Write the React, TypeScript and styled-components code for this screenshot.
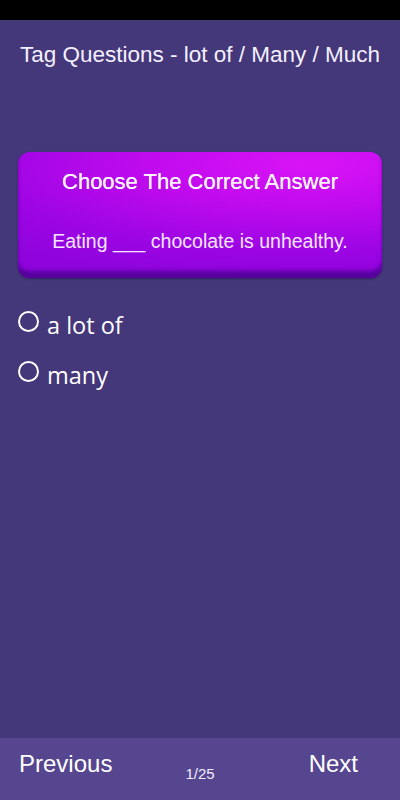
import React from "react";
import styled, { createGlobalStyle } from "styled-components";

const Global = createGlobalStyle`
  html, body { margin: 0; padding: 0; background: #44377a; }
  body { font-family: "Liberation Sans", Arial, sans-serif; }
  * { box-sizing: border-box; }
`;

const Page = styled.div`
  width: 400px;
  height: 800px;
  display: flex;
  flex-direction: column;
  background: #44377a;
  color: #ffffff;
  overflow: hidden;
`;

const StatusBar = styled.div`
  height: 20px;
  background: #000000;
  flex-shrink: 0;
`;

const Main = styled.main`
  flex: 1;
  display: flex;
  flex-direction: column;
`;

const Title = styled.h1`
  margin: 0;
  padding-top: 23px;
  font-size: 22.5px;
  line-height: 24px;
  font-weight: 400;
  text-align: center;
  white-space: nowrap;
  color: #f4f0ff;
`;

const Card = styled.section`
  margin: 85px 18px 0;
  height: 126px;
  border-radius: 12px;
  background: radial-gradient(ellipse 120% 90% at 80% 10%, #d914f6 0%, #c10bee 35%, #9d05e4 75%, #8f04dd 100%);
  box-shadow: inset 0 -8px 4px -1px rgba(70, 0, 140, 0.8), 0 1px 2px rgba(20, 0, 50, 0.4);
  display: flex;
  flex-direction: column;
  align-items: center;
  padding-top: 18px;
`;

const CardTitle = styled.h2`
  margin: 0;
  font-size: 22px;
  line-height: 24px;
  font-weight: 400;
  color: #fbf2ff;
  text-shadow: 0 0 0.5px #fff;
`;

const Sentence = styled.p`
  margin: 35px 0 0;
  font-size: 19.5px;
  line-height: 24px;
  color: #f5e6ff;
`;

const Options = styled.div`
  margin-top: 34px;
  display: flex;
  flex-direction: column;
  gap: 26px;
  padding-left: 18px;
`;

const Option = styled.label`
  display: flex;
  align-items: center;
  gap: 8px;
  height: 24px;
  font-family: "Open Sans", "Noto Sans", sans-serif;
  font-size: 23.5px;
  color: #ffffff;
`;

const Radio = styled.span`
  width: 21px;
  height: 21px;
  border: 2px solid #ffffff;
  border-radius: 50%;
  flex-shrink: 0;
  margin-top: -6px;
`;

const OptionText = styled.span`
  line-height: 24px;
  padding-top: 2px;
`;

const Footer = styled.footer`
  height: 62px;
  flex-shrink: 0;
  background: #56468f;
  display: grid;
  grid-template-columns: 1fr auto 1fr;
  padding: 0 19px;
`;

const NavButton = styled.button<{ $end?: boolean }>`
  background: none;
  border: none;
  padding: 0;
  margin: 14px ${(p) => (p.$end ? "23px" : "0")} 0 0;
  height: 24px;
  align-self: start;
  justify-self: ${(p) => (p.$end ? "end" : "start")};
  font-family: "Liberation Sans", Arial, sans-serif;
  font-size: 24px;
  line-height: 24px;
  color: #ffffff;
  cursor: pointer;
`;

const Counter = styled.span`
  margin-top: 27px;
  font-size: 15px;
  line-height: 18px;
  color: #f0ecff;
  align-self: start;
`;

export default function App() {
  return (
    <>
      <Global />
      <Page>
        <StatusBar />
        <Main>
          <Title>Tag Questions - lot of / Many / Much</Title>
          <Card>
            <CardTitle>Choose The Correct Answer</CardTitle>
            <Sentence>Eating ___ chocolate is unhealthy.</Sentence>
          </Card>
          <Options>
            <Option>
              <Radio />
              <OptionText>a lot of</OptionText>
            </Option>
            <Option>
              <Radio />
              <OptionText>many</OptionText>
            </Option>
          </Options>
        </Main>
        <Footer>
          <NavButton>Previous</NavButton>
          <Counter>1/25</Counter>
          <NavButton $end>Next</NavButton>
        </Footer>
      </Page>
    </>
  );
}
